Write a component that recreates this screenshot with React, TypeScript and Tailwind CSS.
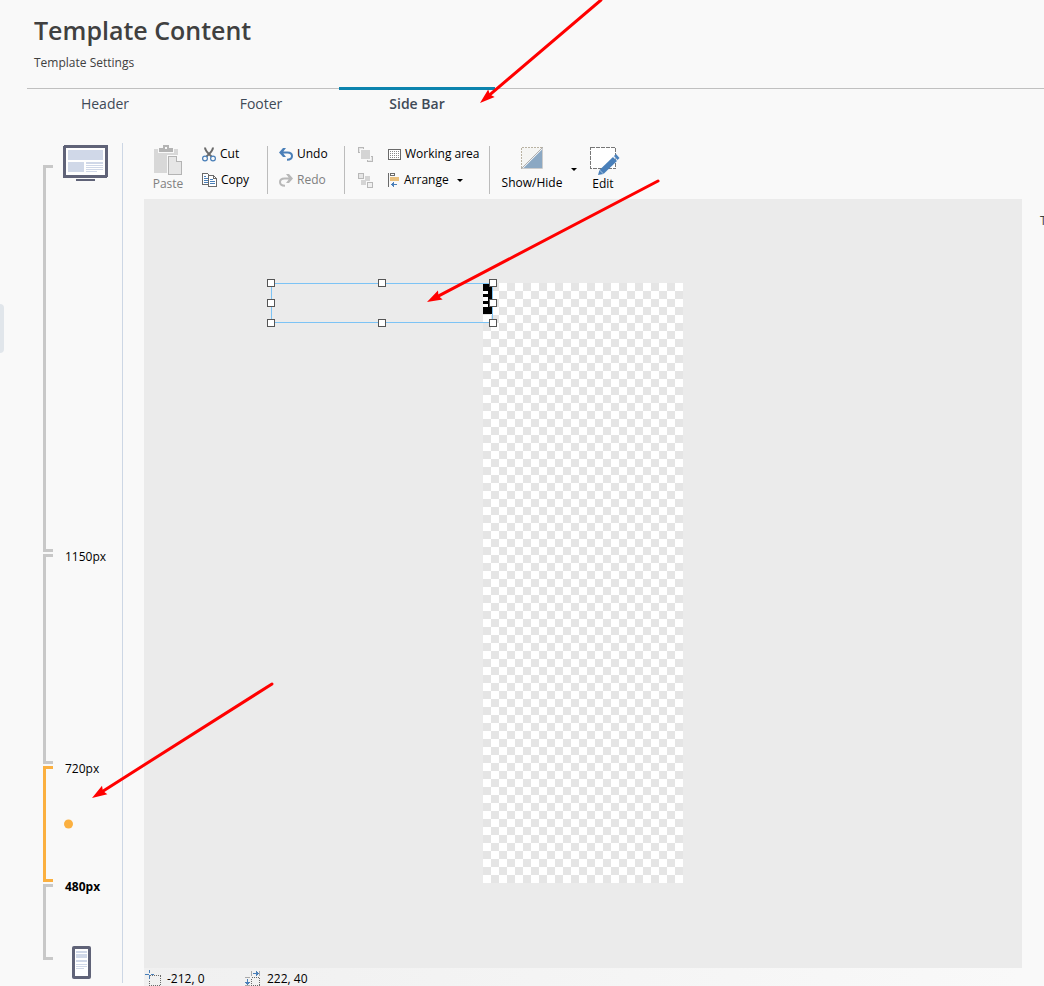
import { ReactNode, useState } from "react";

const TABS = ["Header", "Footer", "Side Bar"];

const HANDLES = [
  "left-0 top-0",
  "left-1/2 top-0",
  "left-full top-0",
  "left-0 top-1/2",
  "left-full top-1/2",
  "left-0 top-full",
  "left-1/2 top-full",
  "left-full top-full"
];

const ARROWS = [
  { x1: 601, y1: 0, x2: 480, y2: 103 },
  { x1: 658, y1: 181, x2: 427, y2: 302 },
  { x1: 272, y1: 684, x2: 92, y2: 798 }
];

function PasteIcon() {
  return (
    <svg width="28" height="31" viewBox="0 0 28 31" shapeRendering="crispEdges">
      <path d="M0 4h24v24H0z" fill="#d8d8d8" />
      <path d="M4 4h16v4H4z" fill="#f9f9f9" />
      <path d="M5 3h4V0h6v3h4v4H5z" fill="#b4b4b4" />
      <rect x="11" y="2" width="2" height="2" fill="#f9f9f9" />
      <path d="M13 10h15v21H13z" fill="#f9f9f9" />
      <path d="M14.500 11.500h8l5 5v13h-13z" fill="#e6e6e6" stroke="#b4b4b4" />
      <path d="M22.500 11.500v5h5" fill="#f9f9f9" stroke="#b4b4b4" />
    </svg>
  );
}

function CutIcon() {
  return (
    <svg width="14" height="15" viewBox="0 0 14 15" fill="none">
      <path d="M3 .5c0 3 2 5 6.500 9M11 .5c0 3-2 5-6.500 9" stroke="#6a6a6a" strokeWidth="2" />
      <circle cx="3" cy="11.500" r="2.400" stroke="#4a7fb8" strokeWidth="1.200" />
      <circle cx="11" cy="11.500" r="2.400" stroke="#4a7fb8" strokeWidth="1.200" />
    </svg>
  );
}

function CopyIcon() {
  return (
    <svg width="15" height="14" viewBox="0 0 15 14" fill="none" shapeRendering="crispEdges">
      <path d="M.5 .5h5l2 2v9h-7z" fill="#fff" stroke="#6a6a6a" />
      <path d="M2 3.500h2M2 5.500h4M2 7.500h4M2 9.500h4" stroke="#4a7fb8" />
      <path d="M6.500 2.500h5l3 3v8h-8z" fill="#fff" stroke="#6a6a6a" />
      <path d="M11.500 2.500v3h3" stroke="#6a6a6a" />
      <path d="M8 6.500h3M8 8.500h5M8 10.500h5" stroke="#4a7fb8" />
    </svg>
  );
}

function UndoIcon({ redo = false }: { redo?: boolean }) {
  return (
    <svg
      width="14"
      height="13"
      viewBox="0 0 14 13"
      fill="none"
      className={redo ? "-scale-x-100 text-[#b8b8b8]" : "text-[#4a7fb8]"}
    >
      <path d="M4 0h3L4.500 3.200v2.600L7 9H4L0 4.500z" fill="currentColor" />
      <path d="M3 4.500h5.500c3 0 4.500 1.300 4.500 3.500s-1.500 3.800-5 3.800" stroke="currentColor" strokeWidth="2" />
    </svg>
  );
}

function GroupIcon() {
  return (
    <svg width="15" height="15" viewBox="0 0 15 15" shapeRendering="crispEdges">
      <rect x=".5" y=".5" width="5" height="5" fill="#e6e6e6" stroke="#b8b8b8" />
      <rect x="9.500" y="9.500" width="5" height="5" fill="#e6e6e6" stroke="#b8b8b8" />
      <rect x="2" y="2" width="11" height="11" fill="#f9f9f9" />
      <rect x="3" y="3" width="9" height="9" fill="#d4d4d4" />
    </svg>
  );
}

function UngroupIcon() {
  return (
    <svg width="15" height="15" viewBox="0 0 15 15" shapeRendering="crispEdges">
      <path d="M3 3h9v9H3z" fill="#d4d4d4" />
      <path d="M0 0h7v7H0zM8 8h7v7H8z" fill="#f9f9f9" />
      <rect x=".5" y=".5" width="5" height="5" fill="#e6e6e6" stroke="#b8b8b8" />
      <rect x="9.500" y="9.500" width="5" height="5" fill="#f0f0f0" stroke="#b8b8b8" />
    </svg>
  );
}

function GridIcon() {
  return (
    <svg width="13" height="11" viewBox="0 0 13 11" fill="none" shapeRendering="crispEdges">
      <rect x=".5" y=".5" width="12" height="10" fill="#fff" stroke="#6a6a6a" />
      <path d="M2 2.500h9M2 4.500h9M2 6.500h9M2 8.500h9" stroke="#888" strokeDasharray="1 1" />
    </svg>
  );
}

function ArrangeIcon() {
  return (
    <svg width="12" height="14" viewBox="0 0 12 14" fill="none" shapeRendering="crispEdges">
      <path d="M.5 0v14" stroke="#6a6a6a" />
      <rect x="2.500" y=".5" width="4" height="2" fill="#fff" stroke="#6a6a6a" />
      <rect x="2" y="4" width="9" height="4" fill="#e9c07d" />
      <path d="M3 11.500h6M5.500 9v5M4.500 10v3" stroke="#4a7fb8" />
    </svg>
  );
}

function ShowHideIcon() {
  return (
    <svg width="22" height="22" viewBox="0 0 22 22" fill="none">
      <path d="M1 1h20L1 21z" fill="#f5f5f3" />
      <path d="M.5 21V.5H21" stroke="#b9b2a2" strokeDasharray="2 1" />
      <path d="M21 2.500V21H2.500z" fill="#8ba8c3" />
      <path d="M21.500 1v20.500H1" stroke="#ccc" />
      <path d="M0 22L22 0" stroke="#b0b0b0" />
    </svg>
  );
}

function EditIcon() {
  return (
    <svg width="30" height="29" viewBox="0 0 30 29" fill="none">
      <rect x=".5" y=".5" width="25" height="21" fill="#fff" />
      <path d="M.5 .5h25v21H.5z" stroke="#777" strokeDasharray="4 1" shapeRendering="crispEdges" />
      <path d="M8 28l1.500-5L23 10l4 4-13.500 13z" fill="#4a80ba" />
      <path d="M24 9l2-2 3.500 4-2 2z" fill="#4a80ba" />
      <path d="M9.500 23l4 4M23 9.500l4.500 4" stroke="#dce7f3" strokeWidth=".7" />
    </svg>
  );
}

function MonitorIcon() {
  return (
    <svg width="45" height="36" viewBox="0 0 45 36" className="block" shapeRendering="crispEdges">
      <rect width="45" height="33" rx="2" fill="#606378" />
      <rect x="3" y="3" width="39" height="27" fill="#fff" />
      <path d="M5 5h35v10H5zM5 17h16v10H5zM23 17h17v2H23zM23 20h17v1H23zM23 22h17v1H23zM23 24h17v1H23zM23 26h11v1H23z" fill="#d0d8e8" />
      <rect x="13" y="34" width="19" height="2" fill="#606378" />
    </svg>
  );
}

function PhoneIcon() {
  return (
    <svg width="19" height="33" viewBox="0 0 19 33" className="block">
      <rect width="19" height="33" rx="2" fill="#606378" />
      <rect x="3" y="3" width="13" height="27" fill="#fff" />
      <path d="M4 5h11v2H4zM4 8h11v4H4zM4 14h11v2H4zM4 18h11v1H4zM4 20h11v1H4zM4 22h8v1H4z" fill="#d0d8e8" />
    </svg>
  );
}

function PositionIcon() {
  return (
    <svg width="16" height="16" viewBox="0 0 16 16" fill="none" shapeRendering="crispEdges">
      <path d="M4.500 5h11v10.500h-11z" stroke="#6a6a6a" strokeDasharray="1 1" />
      <path d="M0 4.500h10M4.500 0v10" stroke="#f1f1f1" strokeWidth="1" />
      <path d="M0 4.500h4M6 4.500h3M4.500 0v3M4.500 5v4" stroke="#4a7fb8" />
    </svg>
  );
}

function SizeIcon() {
  return (
    <svg width="16" height="16" viewBox="0 0 16 16" fill="none" shapeRendering="crispEdges">
      <path d="M6.500 7.500h8v8h-8z" stroke="#6a6a6a" strokeDasharray="1 1" />
      <path d="M6.500 1v5M14.500 1v5M0 7.500h5M0 15.500h5" stroke="#aaa" />
      <path d="M8 3.500h6M11.500 1v5M12.500 2v3M2.500 9v6M0 12.500h5M1 13.500h3" stroke="#4a7fb8" />
    </svg>
  );
}

function Caret() {
  return (
    <svg width="6" height="3" viewBox="0 0 6 3">
      <path d="M0 0h6L3 3z" fill="#000" />
    </svg>
  );
}

function ToolButton({ icon, label, disabled }: { icon: ReactNode; label: string; disabled?: boolean }) {
  return (
    <button
      type="button"
      disabled={disabled}
      className="flex h-[26px] items-center whitespace-nowrap text-black disabled:text-[#808080]"
    >
      <span className="flex min-w-[13px] shrink-0 pr-1">{icon}</span>
      {label}
    </button>
  );
}

function Separator() {
  return <div className="mt-[3px] h-12 w-px shrink-0 bg-[#bcbcbc]" />;
}

function Toolbar() {
  return (
    <div className="flex h-14 shrink-0 pl-[10px]">
      <button type="button" disabled className="flex w-7 flex-col items-center text-[#808080]">
        <span className="mt-[2px] h-[31px]">
          <PasteIcon />
        </span>
        <span className="leading-4">Paste</span>
      </button>
      <div className="-mt-[2px] ml-5 w-[65px] shrink-0">
        <ToolButton icon={<CutIcon />} label="Cut" />
        <ToolButton icon={<CopyIcon />} label="Copy" />
      </div>
      <Separator />
      <div className="-mt-[2px] ml-[11px] w-[65px] shrink-0">
        <ToolButton icon={<UndoIcon />} label="Undo" />
        <ToolButton icon={<UndoIcon redo />} label="Redo" disabled />
      </div>
      <Separator />
      <div className="-mt-[2px] ml-[13px] flex w-[30px] shrink-0 flex-col">
        <button type="button" aria-label="Group" className="flex h-[26px] items-center">
          <GroupIcon />
        </button>
        <button type="button" aria-label="Ungroup" className="flex h-[26px] items-center">
          <UngroupIcon />
        </button>
      </div>
      <div className="-mt-[2px] w-[101px] shrink-0">
        <ToolButton icon={<GridIcon />} label="Working area" />
        <div className="flex items-center">
          <div className="w-[69px]">
            <ToolButton icon={<ArrangeIcon />} label="Arrange" />
          </div>
          <button type="button" aria-label="Arrange options" className="flex h-[26px] items-center">
            <Caret />
          </button>
        </div>
      </div>
      <Separator />
      <button type="button" className="ml-3 flex w-[60px] flex-col items-center whitespace-nowrap text-black">
        <span className="mt-1 h-7">
          <ShowHideIcon />
        </span>
        <span className="leading-4">Show/Hide</span>
      </button>
      <button type="button" aria-label="Show/Hide options" className="flex w-6 justify-center pt-[25px]">
        <Caret />
      </button>
      <button type="button" className="ml-1 flex w-[30px] flex-col items-center text-black">
        <span className="mt-1 h-[29px]">
          <EditIcon />
        </span>
        <span className="pr-1 leading-4">Edit</span>
      </button>
    </div>
  );
}

function Bracket({ active }: { active?: boolean }) {
  return (
    <div
      className={
        active
          ? "w-[10px] border-3 border-r-0 border-[#fbb040]"
          : "w-[10px] border-3 border-r-0 border-[#c8c8c8]"
      }
    />
  );
}

function Breakpoints() {
  return (
    <aside className="mb-[3px] flex w-24 shrink-0 flex-col gap-[2px] border-r border-[#cdd7e5] pt-[22px] pb-[23px] pl-4 text-black">
      <div className="flex flex-[387] gap-[10px]">
        <Bracket />
        <button type="button" aria-label="Desktop" className="-mt-5 self-start">
          <MonitorIcon />
        </button>
      </div>
      <div className="flex flex-[210] gap-3">
        <Bracket />
        <span className="-mt-[5px] leading-4">1150px</span>
      </div>
      <div className="flex flex-[116] gap-3">
        <Bracket active />
        <div className="relative flex flex-col">
          <span className="-mt-[5px] leading-4">720px</span>
          <button
            type="button"
            aria-label="Current width"
            className="absolute top-1/2 -left-px size-[9px] -translate-y-1/2 rounded-full bg-[#fbb040]"
          />
        </div>
      </div>
      <div className="flex flex-[76] gap-3">
        <Bracket />
        <div className="flex flex-col justify-between">
          <span className="-mt-[5px] leading-4 font-bold">480px</span>
          <button type="button" aria-label="Phone" className="-mb-[19px] ml-[7px] self-start">
            <PhoneIcon />
          </button>
        </div>
      </div>
    </aside>
  );
}

function Canvas() {
  return (
    <div className="flex min-h-0 flex-1 justify-center overflow-hidden bg-[#ebebeb] pt-21">
      <div className="relative h-[600px] w-[200px] bg-[conic-gradient(#e5e5e5_25%,#fff_0_50%,#e5e5e5_0_75%,#fff_0)] bg-[length:16px_16px]">
        <div className="absolute top-px left-0 flex h-[30px] w-[9px] flex-col gap-[3px] bg-black pt-[7px]">
          <div className="h-[3px] w-[5px] bg-white" />
          <div className="h-[4px] w-[5px] bg-white" />
          <div className="h-[3px] w-[5px] bg-white" />
        </div>
        <div className="absolute top-0 -left-[212px] h-10 w-[222px] border border-[#7cc3f5]">
          <div className="absolute -inset-px">
            {HANDLES.map((place) => (
              <div
                key={place}
                className={`absolute size-2 -translate-x-1/2 -translate-y-1/2 border border-[#555] bg-white ${place}`}
              />
            ))}
          </div>
        </div>
      </div>
    </div>
  );
}

function Arrow({ x1, y1, x2, y2 }: { x1: number; y1: number; x2: number; y2: number }) {
  const length = Math.hypot(x2 - x1, y2 - y1);
  const angle = (Math.atan2(y2 - y1, x2 - x1) * 180) / Math.PI;
  return (
    <g transform={`translate(${x2} ${y2}) rotate(${angle})`} fill="#ff0000" stroke="#ff0000">
      <path d={`M${-length} 0H-10`} strokeWidth="3" strokeLinecap="round" />
      <path d="M0 0L-15 -5L-13 0L-15 5z" stroke="none" />
    </g>
  );
}

export default function App() {
  const [tab, setTab] = useState("Side Bar");

  return (
    <div className="relative flex h-screen flex-col overflow-hidden bg-[#f9f9f9] font-['Open_Sans','Noto_Sans',sans-serif] text-xs text-[#404040]">
      <header className="h-[87px] shrink-0 pt-3 pl-[34px]">
        <h1 className="text-[25px] leading-9 font-semibold">Template Content</h1>
        <p className="mt-[7px] leading-4">Template Settings</p>
      </header>

      <nav className="ml-[27px] flex h-14 shrink-0 items-start bg-[linear-gradient(#c0c0c0,#c0c0c0)] bg-[length:100%_1px] bg-[position:0_1px] bg-no-repeat">
        {TABS.map((name) => (
          <button
            key={name}
            type="button"
            onClick={() => setTab(name)}
            className={
              name === tab
                ? "w-[156px] border-t-3 border-[#0c84ae] text-sm leading-7 font-semibold text-[#3f4a57]"
                : "w-[156px] border-t-3 border-transparent text-sm leading-7 text-[#3f4a57]"
            }
          >
            {name}
          </button>
        ))}
      </nav>

      <div className="flex min-h-0 flex-1 pl-[27px]">
        <Breakpoints />
        <main className="ml-[21px] flex min-w-0 flex-1 flex-col">
          <Toolbar />
          <Canvas />
          <footer className="flex h-[18px] shrink-0 bg-linear-to-r from-[#f0f0f0] to-[#f9f9f9] pt-[2px] text-black">
            <div className="flex w-[101px] items-end gap-[6px] pl-px">
              <PositionIcon />
              <span className="leading-[14px]">-212, 0</span>
            </div>
            <div className="flex items-end gap-[6px]">
              <SizeIcon />
              <span className="leading-[14px]">222, 40</span>
            </div>
          </footer>
        </main>
        <aside className="w-[22px] shrink-0 pt-[70px] pl-[18px] leading-4">T</aside>
      </div>

      <div className="absolute top-[304px] left-0 h-[49px] w-1 rounded-r bg-[#e1e6eb]" />
      <svg className="pointer-events-none absolute inset-0 size-full">
        {ARROWS.map((arrow) => (
          <Arrow key={arrow.x1} {...arrow} />
        ))}
      </svg>
    </div>
  );
}
